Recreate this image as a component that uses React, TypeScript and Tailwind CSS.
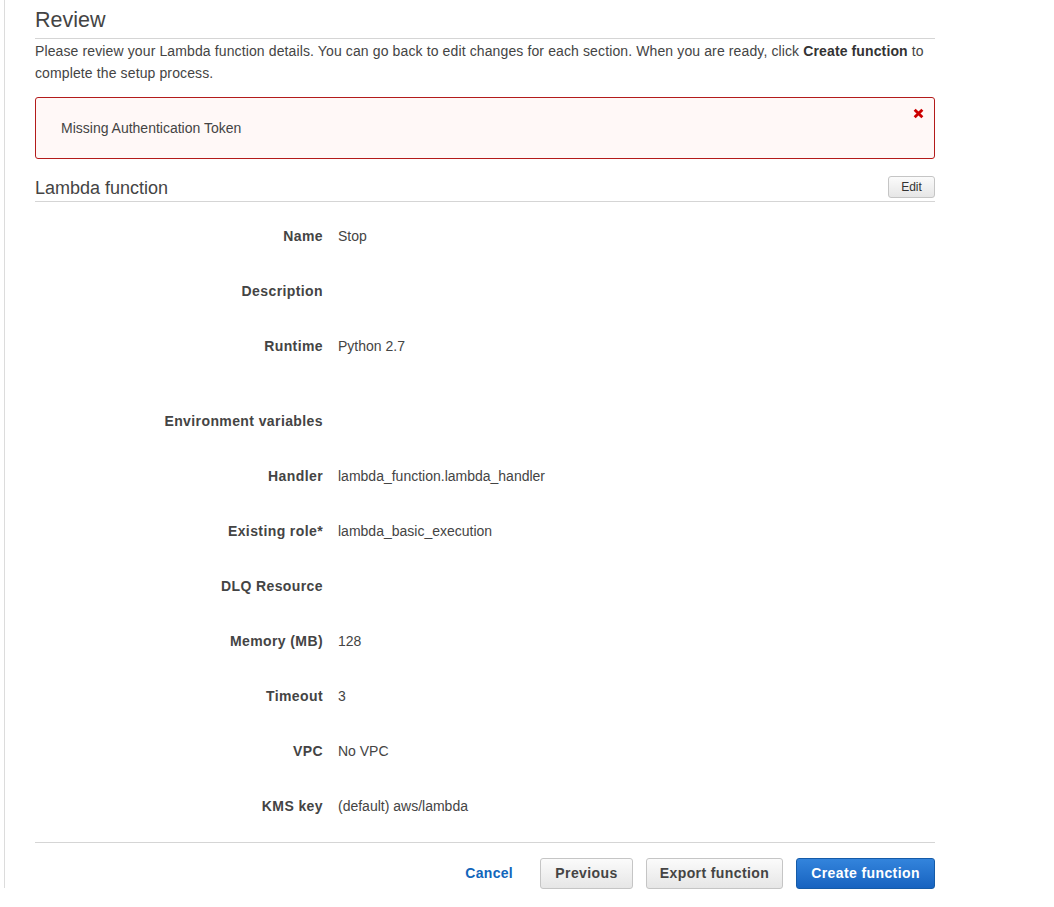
import React from 'react';

const rows: { label: string; value: string; extra?: boolean }[] = [
  { label: 'Name', value: 'Stop' },
  { label: 'Description', value: '' },
  { label: 'Runtime', value: 'Python 2.7' },
  { label: 'Environment variables', value: '', extra: true },
  { label: 'Handler', value: 'lambda_function.lambda_handler' },
  { label: 'Existing role*', value: 'lambda_basic_execution' },
  { label: 'DLQ Resource', value: '' },
  { label: 'Memory (MB)', value: '128' },
  { label: 'Timeout', value: '3' },
  { label: 'VPC', value: 'No VPC' },
  { label: 'KMS key', value: '(default) aws/lambda' },
];

export default function App() {
  return (
    <div className="min-h-[907px] bg-white text-[#444] font-['Liberation_Sans',Arial,sans-serif]">
      <div className="ml-[4px] w-[1050px] border-l border-[#dcdcdc] h-[888px] pl-[30px]">
        <div className="w-[900px]">
          {/* Header */}
          <h1 className="text-[21.5px] leading-[24px] pt-[8px] pb-[6px] border-b border-[#d5d5d5] text-[#444]">Review</h1>
          <p className="text-[14px] leading-[22px] mt-[1px] text-[#444] tracking-[0.12px]">
            Please review your Lambda function details. You can go back to edit changes for each section. When you are ready, click{' '}
            <b className="font-bold text-[#333]">Create function</b> to complete the setup process.
          </p>

          {/* Error */}
          <div className="mt-[13px] h-[62px] border border-[#b31b1b] rounded-[3px] bg-[#fff8f7] flex items-start justify-between pl-[25px] pr-[10px]">
            <span className="text-[14px] leading-[16px] mt-[22px] text-[#444]">Missing Authentication Token</span>
            <svg width="11" height="11" viewBox="0 0 10 10" className="mt-[10px]">
              <path d="M1.5 1.5 L8.5 8.5 M8.5 1.5 L1.5 8.5" stroke="#cc0000" strokeWidth="2.6" strokeLinecap="butt" />
            </svg>
          </div>

          {/* Section header */}
          <div className="mt-[17px] flex items-end justify-between border-b border-[#d5d5d5] pb-[3px]">
            <h2 className="text-[18px] leading-[20px] text-[#444]">Lambda function</h2>
            <button className="h-[22px] w-[47px] text-[12px] text-[#333] border border-[#c5c5c5] rounded-[3px] bg-gradient-to-b from-[#fbfbfb] to-[#e6e6e6]">
              Edit
            </button>
          </div>

          {/* Rows */}
          <div className="pt-[6px]">
            {rows.map(r => (
              <div key={r.label} className={`flex items-center h-[55px] ${r.extra ? 'mt-[20px]' : ''}`}>
                <div className="w-[288px] text-right text-[14px] font-bold text-[#444] leading-[16px] tracking-[0.4px]">{r.label}</div>
                <div className="ml-[15px] text-[14px] text-[#444] leading-[16px]">{r.value}</div>
              </div>
            ))}
          </div>

          {/* Footer */}
          <div className="mt-[9px] border-t border-[#d5d5d5] pt-[15px] flex items-center justify-end">
            <button className="text-[14px] font-bold text-[#1166bb] mr-[27px] tracking-[0.3px]">Cancel</button>
            <button className="h-[31px] w-[93px] text-[14px] font-bold text-[#444] border border-[#c5c5c5] rounded-[3px] bg-gradient-to-b from-[#fbfbfb] to-[#e6e6e6] mr-[13px] tracking-[0.4px]">
              Previous
            </button>
            <button className="h-[31px] w-[137px] text-[14px] font-bold text-[#444] border border-[#c5c5c5] rounded-[3px] bg-gradient-to-b from-[#fbfbfb] to-[#e6e6e6] mr-[13px] tracking-[0.4px]">
              Export function
            </button>
            <button className="h-[31px] w-[139px] text-[14px] font-bold text-white border border-[#155ba8] rounded-[3px] bg-gradient-to-b from-[#3384dc] to-[#1763c0] tracking-[0.4px]">
              Create function
            </button>
          </div>
        </div>
      </div>
    </div>
  );
}
